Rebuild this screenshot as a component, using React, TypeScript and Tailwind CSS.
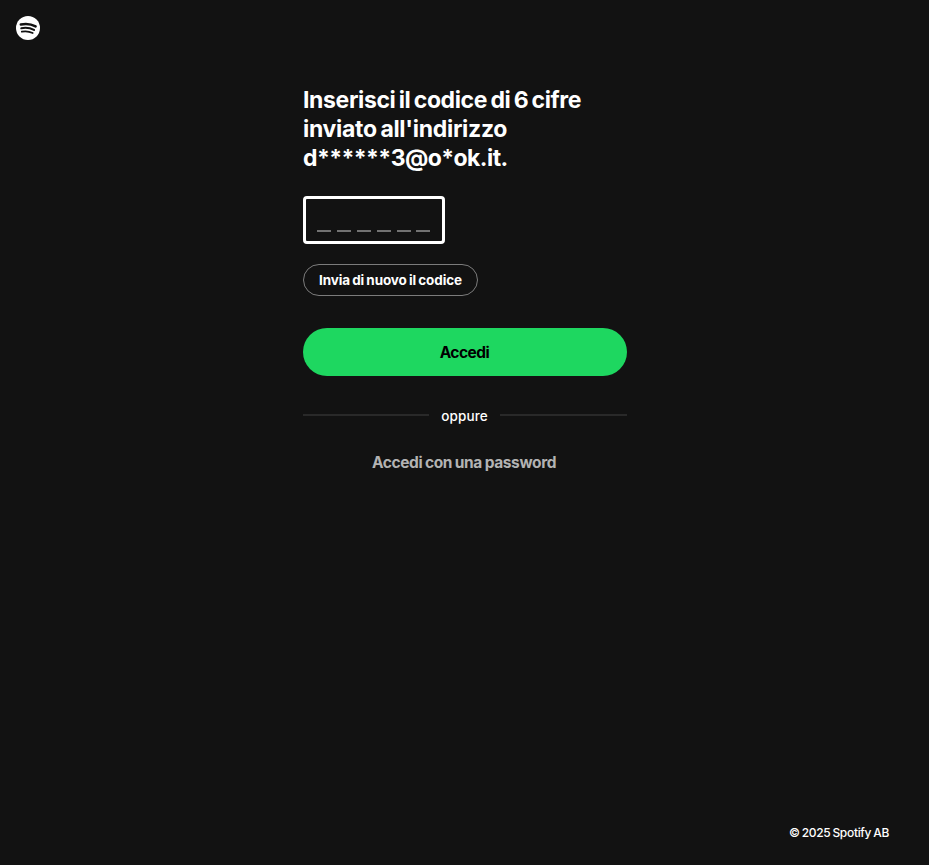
import React from "react";

function Logo() {
  return (
    <svg className="block size-6" viewBox="0 0 24 24" fill="none" stroke="#121212" strokeLinecap="round" aria-label="Spotify">
      <circle cx="12" cy="12" r="12" fill="white" stroke="none" />
      <path strokeWidth="2.5" d="M4.8 8.5C10 7.4 15.2 8 19.6 10.4" />
      <path strokeWidth="2.1" d="M5.3 12.2C9.8 11.3 14.2 11.9 18 13.9" />
      <path strokeWidth="1.7" d="M5.8 15.7C9.6 14.9 13.4 15.4 16.7 17.1" />
    </svg>
  );
}

function CodeField() {
  return (
    <div className="mt-[23px] flex h-12 w-[142px] items-end gap-1.5 rounded-[4px] border-[3px] border-white pb-[9px] pl-[11px]">
      {[0, 1, 2, 3, 4, 5].map((slot) => (
        <span key={slot} className="h-[2px] w-[14px] bg-[#727272] last:-ml-px" />
      ))}
    </div>
  );
}

export default function App() {
  return (
    <div className="flex h-screen flex-col bg-[#121212] font-['Inter',sans-serif] text-white">
      <header className="h-14 p-4">
        <Logo />
      </header>
      <main className="mx-auto ml-[303px] flex w-[324px] flex-1 flex-col items-start pt-[30px]">
        <h1 className="text-[23px] leading-[29px] font-bold whitespace-nowrap">
          <span className="block tracking-[-0.37px] [word-spacing:-1.8px]">Inserisci il codice di 6 cifre</span>
          <span className="block tracking-[-0.3px] [word-spacing:-1.5px]">inviato all'indirizzo</span>
          <span className="block tracking-[-0.57px]">d******3@o*ok.it.</span>
        </h1>
        <CodeField />
        <button className="mt-5 flex h-8 w-[175px] items-center justify-center rounded-full border border-[#7c7c7c] pt-px text-[13.5px] font-bold tracking-[-0.11px] whitespace-nowrap [word-spacing:-0.9px]">
          Invia di nuovo il codice
        </button>
        <button className="mt-8 flex h-12 w-full items-center justify-center rounded-full bg-[#1ed760] pt-[2px] pr-px text-[15.5px] font-bold tracking-[-0.5px] text-black">
          Accedi
        </button>
        <div className="mt-[30px] flex h-5 w-full items-center text-[13.5px] font-medium">
          <span className="mb-[2px] h-[2px] w-[126px] bg-[#292929]" />
          <span className="flex-1 text-center tracking-[0.1px]">oppure</span>
          <span className="mb-[2px] h-[2px] w-[127px] bg-[#292929]" />
        </div>
        <button className="mt-6 flex h-6 w-full items-center justify-center pt-[2px] pr-[2px] text-[15.5px] font-bold tracking-[-0.38px] text-[#b3b3b3] [word-spacing:-0.6px]">
          Accedi con una password
        </button>
      </main>
      <footer className="flex h-16 items-center justify-end pr-10 text-[12px] font-medium tracking-[-0.32px] [word-spacing:-0.8px]">
        © 2025 Spotify AB
      </footer>
    </div>
  );
}
